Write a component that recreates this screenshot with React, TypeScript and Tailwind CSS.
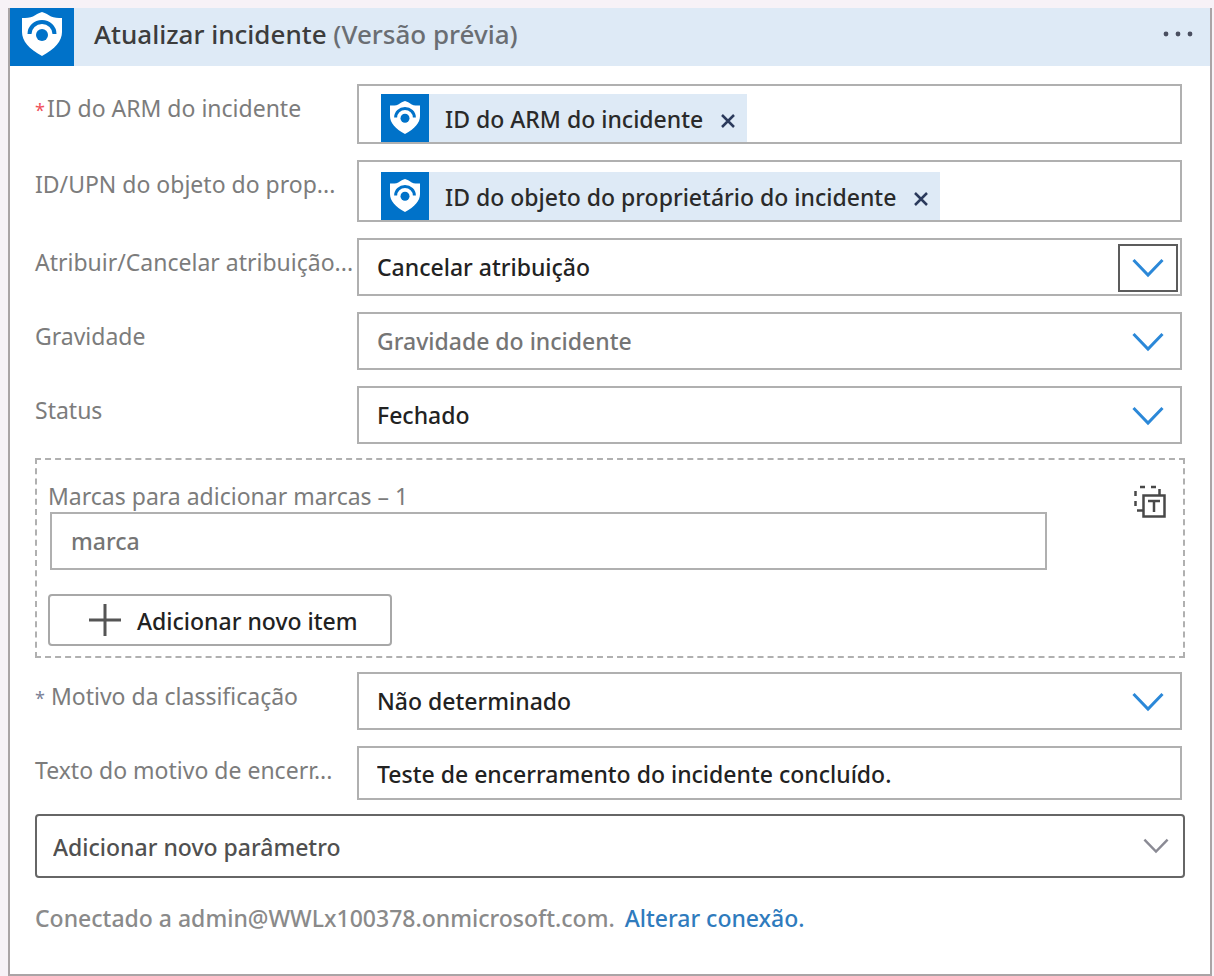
import React from 'react';

interface FieldRowProps {
    id: string;
    label: string;
    mark?: React.ReactNode;
    children: React.ReactNode;
}

const FIELD = 'w-full border-2 border-[#b0b0b0] bg-white';

/** White shield on the connector's blue tile; the parent sets the tile size. */
const ShieldTile: React.FC<{ className: string; iconClassName: string }> = ({ className, iconClassName }) => (
    <span className={`flex shrink-0 items-start justify-center bg-[#0072c9] ${className}`}>
        <svg viewBox="0 0 40 44" className={iconClassName} aria-hidden="true">
            <path d="M20 0 C24 1 26 3 29 4.500 C32 6 36 6 40 6 V20 C40 29 33 37 20 44 C7 37 0 29 0 20 V6 C4 6 8 6 11 4.500 C14 3 16 1 20 0 Z" fill="#fff" />
            <path d="M7.500 22 A12.500 12 0 0 1 32.500 22" fill="none" stroke="#0072c9" strokeWidth="4" />
            <circle cx="20" cy="23" r="6" fill="#0072c9" />
        </svg>
    </span>
);

const Chevron: React.FC<{ className?: string }> = ({ className }) => (
    <svg viewBox="0 0 32 20" className={className} fill="none" stroke="currentColor" aria-hidden="true">
        <path d="M1.500 2 L16 17 L30.500 2" />
    </svg>
);

const SwitchModeIcon = () => (
    <svg width="36" height="36" viewBox="0 0 36 36" fill="none" stroke="#484848" strokeWidth="2.500" aria-hidden="true">
        <path d="M7 3 H12 M18 3 H23 M26.500 5 V11 M2.500 7 V12 M2.500 17 V22 M4 26.500 H10" />
        <rect x="10.500" y="11.500" width="21" height="21" />
        <path d="M15 17 H27 M21 17 V28" />
    </svg>
);

/** Label on the left, the parameter's control on the right. */
const FieldRow: React.FC<FieldRowProps> = ({ id, label, mark, children }) => (
    <div className="flex items-start pr-[3px]">
        <label htmlFor={id} className="w-[322px] shrink-0 whitespace-nowrap pt-2 font-normal text-[#7c7c7c]">
            {mark}{label}
        </label>
        <div className="min-w-0 flex-1">{children}</div>
    </div>
);

const Token: React.FC<{ id: string; text: string }> = ({ id, text }) => (
    <span className="flex h-12 items-center bg-[#deeaf6] text-[#2a2a2a]">
        <ShieldTile className="size-12 pt-[7px]" iconClassName="h-[33px] w-[30px]" />
        <span className="pl-4 pt-0.5">{text}</span>
        <button id={id} type="button" aria-label={`Remover ${text}`} className="ml-[18px] mr-3 pt-1.5 text-[#2b3a5c]">
            <svg width="14" height="14" viewBox="0 0 14 14" fill="none" stroke="currentColor" strokeWidth="2.500">
                <path d="M1 1 L13 13 M13 1 L1 13" />
            </svg>
        </button>
    </span>
);

interface SelectFieldProps {
    id: string;
    options: string[];
    placeholder?: boolean;
    focused?: boolean;
}

const SelectField: React.FC<SelectFieldProps> = ({ id, options, placeholder = false, focused = false }) => (
    <div className="relative">
        <select
            id={id}
            defaultValue={options[0]}
            className={`${FIELD} h-[58px] appearance-none pl-[18px] pr-16 outline-none ${placeholder ? 'text-[#757575]' : 'text-[#222222]'}`}
        >
            {options.map(o => <option key={o}>{o}</option>)}
        </select>
        <span className={`pointer-events-none absolute right-1 top-1.5 flex h-12 w-[60px] items-center justify-center border-2 ${focused ? 'border-[#5c5c5c]' : 'border-transparent'}`}>
            <Chevron className="h-5 w-8 stroke-[3] text-[#2b88d8]" />
        </span>
    </div>
);

export default function App() {
    return (
        <div className="min-h-screen bg-[#f7f2f7] px-2 pt-2 pr-[2px] pb-px font-['Noto_Sans','Open_Sans',sans-serif] text-[23px] font-medium leading-8">
            <main className="border-2 border-t-0 border-[#aaa4a6] bg-white">
                <header className="flex h-[58px] items-center bg-[#deeaf6] pr-4">
                    <ShieldTile className="h-[58px] w-16 pt-1" iconClassName="h-11 w-10" />
                    <h1 className="flex-1 pb-1.5 pl-5 text-[26px] text-[#3c3c3c]">
                        Atualizar incidente <span className="text-[#6a6e73]">(Versão prévia)</span>
                    </h1>
                    <button type="button" aria-label="Mais comandos" className="pb-1.5 text-[#4a4f60]">
                        <svg width="32" height="8" viewBox="0 0 32 8" fill="currentColor">
                            <circle cx="4" cy="4" r="2.400" />
                            <circle cx="16" cy="4" r="2.400" />
                            <circle cx="28" cy="4" r="2.400" />
                        </svg>
                    </button>
                </header>

                <form className="flex flex-col gap-4 px-[25px] pt-[18px] pb-[40px]">
                    <FieldRow id="arm" label="ID do ARM do incidente" mark={<span className="pr-0.5 text-lg leading-none text-[#f0505a]">*</span>}>
                        <div className={`${FIELD} flex h-[60px] items-end pl-[22px]`}>
                            <Token id="arm" text="ID do ARM do incidente" />
                        </div>
                    </FieldRow>
                    <FieldRow id="owner" label="ID/UPN do objeto do prop...">
                        <div className={`${FIELD} flex h-[62px] items-end pl-[22px]`}>
                            <Token id="owner" text="ID do objeto do proprietário do incidente" />
                        </div>
                    </FieldRow>
                    <FieldRow id="assign" label="Atribuir/Cancelar atribuição...">
                        <SelectField id="assign" options={['Cancelar atribuição', 'Atribuir']} focused />
                    </FieldRow>
                    <FieldRow id="severity" label="Gravidade">
                        <SelectField id="severity" options={['Gravidade do incidente', 'Alta', 'Média', 'Baixa']} placeholder />
                    </FieldRow>
                    <FieldRow id="status" label="Status">
                        <SelectField id="status" options={['Fechado', 'Ativo', 'Novo']} />
                    </FieldRow>

                    <section className="-my-0.5 flex h-[200px] items-start justify-between border-2 border-dashed border-[#b0b0b0] pl-[11px] pr-[14px]">
                        <div className="min-w-0 flex-1 pt-5">
                            <label htmlFor="tag" className="block font-normal text-[#7c7c7c]">Marcas para adicionar marcas – 1</label>
                            <input
                                id="tag"
                                placeholder="marca"
                                className="ml-0.5 h-[58px] w-[calc(100%-88px)] border-2 border-[#b0b0b0] pl-[19px] outline-none placeholder:text-[#757575]"
                            />
                            <button type="button" className="mt-6 flex h-[52px] w-[344px] items-center rounded border-2 border-[#a8a8a8] pl-[39px] text-[#222222]">
                                <svg width="32" height="32" viewBox="0 0 32 32" stroke="#555555" strokeWidth="3" aria-hidden="true">
                                    <path d="M0 16 H32 M16 0 V32" />
                                </svg>
                                <span className="pl-4 pt-0.5">Adicionar novo item</span>
                            </button>
                        </div>
                        <button type="button" aria-label="Alternar para texto" className="mt-6">
                            <SwitchModeIcon />
                        </button>
                    </section>

                    <FieldRow id="reason" label=" Motivo da classificação" mark={<span className="text-lg leading-none text-[#7a7f96]">*</span>}>
                        <SelectField id="reason" options={['Não determinado', 'Verdadeiro positivo', 'Falso positivo']} />
                    </FieldRow>
                    <FieldRow id="reasonText" label="Texto do motivo de encerr...">
                        <input
                            id="reasonText"
                            defaultValue="Teste de encerramento do incidente concluído."
                            className={`${FIELD} h-[54px] pl-[18px] pt-0.5 text-[#222222] outline-none`}
                        />
                    </FieldRow>

                    <div className="relative -mt-0.5">
                        <select
                            aria-label="Adicionar novo parâmetro"
                            className="h-16 w-full appearance-none rounded border-2 border-[#666666] bg-white pl-4 pr-14 pt-0.5 text-[#505050] outline-none"
                        >
                            <option>Adicionar novo parâmetro</option>
                        </select>
                        <Chevron className="pointer-events-none absolute right-4 top-6 h-4 w-[26px] stroke-[3] text-[#8a8a94]" />
                    </div>

                    <p className="pt-2 text-[#8a8a8a]">
                        Conectado a admin@WWLx100378.onmicrosoft.com.{' '}
                        <a href="#conexao" className="pl-1 text-[#2f7bbd]">Alterar conexão.</a>
                    </p>
                </form>
            </main>
        </div>
    );
}
